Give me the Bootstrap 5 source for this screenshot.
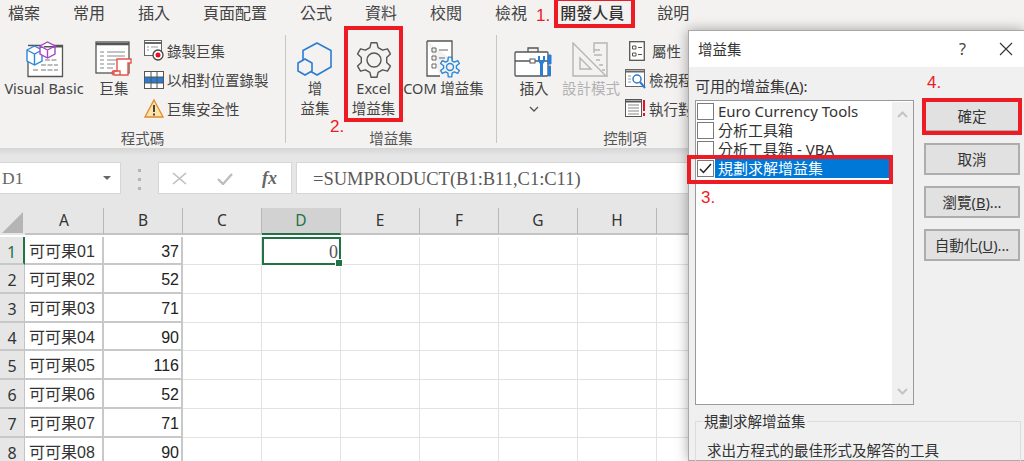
<!DOCTYPE html>
<html lang="zh-Hant">
<head>
  <meta charset="UTF-8">
  <meta name="viewport" content="width=device-width, initial-scale=1.0">
  <title>增益集</title>
  <link href="https://cdn.jsdelivr.net/npm/bootstrap@5.3.0/dist/css/bootstrap.min.css" rel="stylesheet">
  <style>
    html, body { height: 461px; overflow: hidden; }
    body {
      position: relative;
      width: 1024px;
      background: #fff;
      color: #444;
      font-family: "Noto Sans", "Noto Sans CJK TC", sans-serif;
      font-size: 14.5px;
      line-height: 20px;
    }

    /* ribbon */
    .rb-top { height: 148px; background: #f3f2f1; }
    .rb-tabs { height: 28px; padding-left: 8px; gap: 33px; font-size: 16px; line-height: 26px; white-space: nowrap; }
    .rb-tab-on { font-weight: 500; color: #333; }
    .rb-groups { height: 120px; padding-top: 7px; }
    .rb-group { height: 108px; border-right: 1px solid #c6c6c6; flex: none; }
    .rb-g1 { width: 286px; }
    .rb-g2 { width: 211px; }
    .rb-g3 { width: 256px; border: 0; }
    .rb-items { height: 93px; }
    .rb-label { height: 15px; text-align: center; color: #555; }
    .rb-btn { flex: none; text-align: center; white-space: nowrap; color: #444; }
    .rb-icon { height: 43px; display: flex; align-items: flex-end; justify-content: center; }
    .rb-off { color: #b1b1b1; }
    .rb-small { flex: none; padding-top: 1px; white-space: nowrap; }
    .rb-line { height: 29px; display: flex; align-items: center; gap: 3px; }
    .rb-line svg { flex: none; }
    .w-vb { width: 88px; }
    .w-mc { width: 52px; }
    .w-ad { width: 58px; }
    .w-xl { width: 59px; }
    .w-com { width: 81px; }
    .w-in { width: 54px; margin-left: 10px; }
    .w-dz { width: 60px; }

    /* formula bar */
    .fx-bar {
      height: 60px;
      padding-top: 14px;
      gap: 4px;
      background: linear-gradient(#d4d4d4, #e6e6e6 7px);
    }
    .fx-box { height: 32px; background: #fff; border: 1px solid #d6d6d6; flex: none; }
    .fx-name { width: 121px; border-left: 0; padding: 0 9px 0 2px; font: 17.5px/30px "Liberation Serif", serif; color: #666; }
    .fx-caret { width: 0; height: 0; border: 4px solid transparent; border-top-color: #666; border-bottom: 0; }
    .fx-dots { width: 29px; flex: none; }
    .fx-dots span { display: block; width: 3px; height: 3px; background: #b5b5b5; margin: 3px 0; }
    .fx-btns { width: 134px; padding: 0 14px 0 13px; }
    .fx-sym { font: italic 700 18px/30px "Liberation Serif", serif; color: #666; }
    .fx-input { flex: 1; padding-left: 16px; font: 18.5px/32px "Liberation Serif", serif; color: #595959; border-right: 0; white-space: nowrap; }

    /* sheet */
    .sheet { display: grid; grid-template-columns: 25px repeat(9, 79px); grid-auto-rows: 28.7px; }
    .sh-corner, .sh-col, .sh-row { background: #e6e6e6; color: #333; font-size: 15.5px; }
    .sh-corner { position: relative; height: 27px; }
    .sh-corner::after {
      content: "";
      position: absolute;
      right: 2px; bottom: 2px;
      border-style: solid;
      border-width: 0 0 21px 21px;
      border-color: transparent transparent #b5b5b5 transparent;
    }
    .sh-col { height: 27px; border-right: 1px solid #b8b8b8; border-bottom: 2px solid #c4c4c4; text-align: center; line-height: 25px; }
    .sh-col-on { background: #d2d2d2; color: #217346; border-bottom-color: #217346; }
    .sh-row { border-bottom: 2px solid #c8c8c8; border-right: 1px solid #c4c4c4; text-align: center; line-height: 30px; font-size: 16px; }
    .sh-row-on { color: #217346; border-right: 2px solid #217346; }
    .sh-cell { border-right: 1px solid #e2e2e2; border-bottom: 1px solid #e2e2e2; line-height: 30px; font-size: 16px; color: #222; font-family: "Liberation Sans", "Noto Sans CJK TC", sans-serif; }
    .sh-data { border-right: 2px solid #c8c8c8; border-bottom: 2px solid #c8c8c8; white-space: nowrap; }
    .sh-a { padding-left: 4px; color: #333; }
    .sh-b { text-align: right; padding-right: 2px; }
    .sh-active { position: relative; border: 2px solid #217346; text-align: right; padding-right: 1px; font: 18px/27px "Liberation Serif", serif; color: #555; }
    .sh-active::after { content: ""; position: absolute; right: -4px; bottom: -4px; width: 6px; height: 6px; background: #217346; border: 1px solid #fff; box-sizing: content-box; }

    /* dialog */
    .dlg {
      position: absolute;
      left: 688px; top: 30px;
      width: 336px; height: 431px;
      background: #f0f0f0;
      border: 1px solid #a9a9a9;
      border-right: 0;
      box-shadow: 0 0 12px rgba(0,0,0,.35);
      color: #333;
    }
    .dlg-title { flex: none; height: 36px; background: #fff; padding: 0 11px 0 9px; }
    .dlg-title .dlg-help { font-size: 16px; margin-right: 33px; color: #444; }
    .dlg-main { flex: none; padding: 0 3px 0 6px; gap: 10px; }
    .dlg-left { width: 219px; flex: none; }
    .dlg-cap { height: 33px; padding-top: 9px; line-height: 20px; font-size: 15px; white-space: nowrap; }
    .dlg-list { height: 305px; background: #fff; border: 1px solid #9a9a9a; padding: 1px 0 0 1px; }
    .dlg-items { width: 192px; }
    .dlg-item { height: 19px; line-height: 19px; font-size: 15px; white-space: nowrap; color: #333; }
    .dlg-check { flex: none; width: 17px; height: 17px; margin-right: 1px; border: 1px solid #7a7a7a; background: #fff; display: flex; align-items: center; justify-content: center; }
    .dlg-sel { flex: 1; height: 19px; background: #0078d7; color: #fff; padding-left: 3px; }
    .dlg-plain { padding-left: 3px; }
    .dlg-scroll { width: 21px; background: #f0f0f0; margin-left: auto; padding: 9px 0; }
    .dlg-right { width: 96px; flex: none; padding-top: 33px; }
    .btn.dlg-btn {
      display: block;
      width: 96px; height: 32px;
      margin-bottom: 11px;
      padding: 0;
      background: #e1e1e1;
      border: 2px solid #adadad;
      border-radius: 0;
      color: #333;
      font-size: 14.5px;
      line-height: 27px;
    }
    .dlg-fs { position: relative; flex: none; height: 60px; margin: 16px 3px 0 6px; border: 1px solid #dcdcdc; padding: 18px 0 0 11px; font-size: 14.5px; white-space: nowrap; }
    .dlg-fs-title { position: absolute; left: 7px; top: -11px; background: #f0f0f0; padding: 0 1px; }

    /* red marks from the tutorial */
    .mark-box { position: absolute; border: 4px solid #ed1c24; }
    .mark-num { position: absolute; color: #ed1c24; font-family: "Liberation Sans", sans-serif; font-size: 17px; line-height: 20px; white-space: nowrap; }
  </style>
</head>
<body>
  <div class="rb-top">
    <div class="rb-tabs d-flex">
      <span>檔案</span><span>常用</span><span>插入</span><span>頁面配置</span><span>公式</span><span>資料</span><span>校閱</span><span>檢視</span><span class="rb-tab-on">開發人員</span><span>說明</span>
    </div>
    <div class="rb-groups d-flex">
      <div class="rb-group rb-g1">
        <div class="rb-items d-flex">
          <div class="rb-btn w-vb">
            <div class="rb-icon">
              <svg width="39" height="37" viewBox="0 0 39 37" fill="none">
                <path d="M3 4.5H37.5V35.500H3V20" stroke="#555" stroke-width="1.300" fill="#fff"/><path d="M19 5.500H37" stroke="#555" stroke-width="2"/>
                <path d="M16 24H33M16 29H33M8 29H13M20 19H33" stroke="#777" stroke-dasharray="5 1.500"/>
                <path d="M2 9L9.500 5L17 9V20L9.500 24L2 20ZM2 9L9.500 13L17 9M9.500 13V24" fill="#fff" stroke="#2b88d8" stroke-width="1.400"/>
                <path d="M15 5L22.500 1L30 5V13L22.500 17L15 13ZM15 5L22.500 9L30 5M22.500 9V17" fill="#fff" stroke="#a744c6" stroke-width="1.400"/>
              </svg>
            </div>
            <div>Visual Basic</div>
          </div>
          <div class="rb-btn w-mc">
            <div class="rb-icon">
              <svg width="38" height="37" viewBox="0 0 38 37" fill="none">
                <rect x="1" y="1" width="33" height="31" fill="#fff" stroke="#555" stroke-width="1.300"/><path d="M1 3H34" stroke="#555" stroke-width="2.500"/>
                <path d="M5 11H9M12 11H30M5 15H9M12 15H30M5 19H9M12 19H22M5 23H9M12 23H20M5 27H9M12 27H18" stroke="#888"/>
                <path d="M22 18H36V22H33V34H19V30H22Z" fill="#fff" stroke="#e8534c" stroke-width="1.400"/><path d="M18 34A3 3 0 0 1 18 30H25V34" stroke="#e8534c" stroke-width="1.400"/>
              </svg>
            </div>
            <div>巨集</div>
          </div>
          <div class="rb-small ms-1">
            <div class="rb-line">
              <svg width="20" height="21" viewBox="0 0 20 21" fill="none"><rect x=".5" y=".5" width="17" height="15" fill="#fff" stroke="#666"/><path d="M1 3H17" stroke="#666" stroke-width="2"/><path d="M3 7H5M3 10H5M7 7H14" stroke="#999"/><circle cx="14" cy="15" r="5" fill="#fff" stroke="#444" stroke-width="1.300"/><circle cx="14" cy="15" r="2.500" fill="#e81123"/></svg>
              <span>錄製巨集</span>
            </div>
            <div class="rb-line">
              <svg width="20" height="18" viewBox="0 0 20 18" fill="none"><rect x=".5" y=".5" width="19" height="17" fill="#fff" stroke="#555"/><rect x="1" y="6" width="18" height="6" fill="#2b7cd3"/><path d="M7 1V17M13 1V17M1 6H19M1 12H19" stroke="#555"/></svg>
              <span>以相對位置錄製</span>
            </div>
            <div class="rb-line">
              <svg width="20" height="19" viewBox="0 0 20 19"><path d="M10 1L19 18H1Z" fill="#fce4a8" stroke="#e08a2b" stroke-width="1.300"/><path d="M9 6H11V13H9ZM9 14.500H11V16.500H9Z" fill="#444"/></svg>
              <span>巨集安全性</span>
            </div>
          </div>
        </div>
        <div class="rb-label">程式碼</div>
      </div>
      <div class="rb-group rb-g2">
        <div class="rb-items d-flex">
          <div class="rb-btn w-ad">
            <div class="rb-icon">
              <svg width="38" height="36" viewBox="0 0 38 36" fill="none"><path d="M21 1L35 8.500V25L21 33L7 25V8.500Z" stroke="#2b7cd3" stroke-width="1.600"/><path d="M9 17L16 21V29L9 33L2 29V21Z" fill="#f3f2f1" stroke="#2b7cd3" stroke-width="1.600"/></svg>
            </div>
            <div>增<br>益集</div>
          </div>
          <div class="rb-btn w-xl">
            <div class="rb-icon">
              <svg width="38" height="36" viewBox="0 0 38 36" fill="none"><path class="gear-path" data-c="19 18" data-r="13 17.500" data-n="6" stroke="#555" stroke-width="1.400" stroke-linejoin="round"/><circle cx="19" cy="18" r="7" stroke="#555" stroke-width="1.400"/></svg>
            </div>
            <div>Excel<br>增益集</div>
          </div>
          <div class="rb-btn w-com">
            <div class="rb-icon">
              <svg width="36" height="38" viewBox="0 0 36 38" fill="none"><path d="M1 1H26V20M14 36H1V1" fill="#fff" stroke="#555" stroke-width="1.300"/><path d="M6 8H10V12H6ZM6 16H10V20H6ZM6 24H10V28H6Z" stroke="#666"/><path d="M13 10H22M13 18H19" stroke="#666"/><path class="gear-path" data-c="24 27" data-r="6.500 10" data-n="6" fill="#f3f2f1" stroke="#2b88d8" stroke-width="1.400" stroke-linejoin="round"/><circle cx="24" cy="27" r="3.500" stroke="#2b88d8" stroke-width="1.400"/></svg>
            </div>
            <div>COM 增益集</div>
          </div>
        </div>
        <div class="rb-label">增益集</div>
      </div>
      <div class="rb-group rb-g3">
        <div class="rb-items d-flex">
          <div class="rb-btn w-in">
            <div class="rb-icon">
              <svg width="40" height="32" viewBox="0 0 40 32" fill="none"><path d="M14 6V2H24V6" stroke="#555" stroke-width="1.300"/><rect x="1" y="6" width="33" height="24" rx="1" fill="#fff" stroke="#555" stroke-width="1.300"/><path d="M1 15H17M21 15H34" stroke="#555" stroke-width="1.300"/><rect x="16" y="13" width="5" height="4" fill="#fff" stroke="#555"/><path d="M24 10V15L26 18V30H29V18L31 15V10L29 10V14H26V10Z" fill="#2b7cd3"/><path d="M34 9H37V18H34ZM34.500 20H36.500V30H34.500Z" fill="#2b7cd3" stroke="#2b7cd3"/></svg>
            </div>
            <div>插入</div>
            <svg class="d-block mx-auto mt-2" width="10" height="6" viewBox="0 0 10 6" fill="none"><path d="M1 1L5 5L9 1" stroke="#555" stroke-width="1.300"/></svg>
          </div>
          <div class="rb-btn w-dz rb-off">
            <div class="rb-icon">
              <svg width="38" height="36" viewBox="0 0 38 36" fill="none" stroke="#b5b5b5" stroke-width="1.400"><path d="M1 1L34 34H1ZM8 16L19 27H8Z"/><path d="M22 11V1H35V35H35M22 8H28M22 13H30M24 18H28M27 23H31M30 28H33" /></svg>
            </div>
            <div>設計模式</div>
          </div>
          <div class="rb-small ms-1">
            <div class="rb-line ps-1">
              <svg width="16" height="20" viewBox="0 0 16 20" fill="none"><rect x=".7" y=".7" width="14.600" height="18.600" fill="#fff" stroke="#555" stroke-width="1.300"/><path d="M3.500 5H7V8H3.500ZM3.500 12H7V15H3.500ZM9 6.500H13M9 13.500H13" stroke="#555"/></svg>
              <span class="ms-1">屬性</span>
            </div>
            <div class="rb-line">
              <svg width="21" height="21" viewBox="0 0 21 21" fill="none"><rect x=".5" y=".5" width="19" height="17" fill="#fff" stroke="#666"/><path d="M1 2.500H19" stroke="#666" stroke-width="2"/><path d="M3 7H6M3 10H6M3 13H6" stroke="#999"/><circle cx="12" cy="10" r="4" fill="#fff" stroke="#2b7cd3" stroke-width="1.500"/><path d="M15 13L20 19" stroke="#2b7cd3" stroke-width="2"/></svg>
              <span>檢視程式碼</span>
            </div>
            <div class="rb-line">
              <svg width="21" height="19" viewBox="0 0 21 19" fill="none"><rect x=".5" y=".5" width="16" height="17" fill="#fff" stroke="#555"/><path d="M1 2.500H16" stroke="#555" stroke-width="2"/><path d="M3 6H14M3 9H14M3 12H14M3 15H14" stroke="#888"/><path d="M19 1V12M19 14V17" stroke="#e81123" stroke-width="2"/></svg>
              <span>執行對話方塊</span>
            </div>
          </div>
        </div>
        <div class="rb-label">控制項</div>
      </div>
    </div>
  </div>

  <div class="fx-bar d-flex">
    <div class="fx-box fx-name d-flex align-items-center justify-content-between"><span>D1</span><span class="fx-caret"></span></div>
    <div class="fx-dots d-flex flex-column align-items-center pt-1"><span></span><span></span><span></span></div>
    <div class="fx-box fx-btns d-flex align-items-center justify-content-between">
      <svg width="15" height="13" viewBox="0 0 15 13" fill="none"><path d="M1 1L14 12M14 1L1 12" stroke="#bdbdbd" stroke-width="1.600"/></svg>
      <svg width="16" height="13" viewBox="0 0 16 13" fill="none"><path d="M1 7L6 12L15 2" stroke="#bdbdbd" stroke-width="2.400"/></svg>
      <span class="fx-sym">fx</span>
    </div>
    <div class="fx-box fx-input">=SUMPRODUCT(B1:B11,C1:C11)</div>
  </div>

  <div class="sheet" id="sheet"></div>

  <div class="dlg d-flex flex-column">
    <div class="dlg-title d-flex align-items-center justify-content-between">
      <span>增益集</span>
      <span class="d-flex align-items-center">
        <span class="dlg-help">?</span>
        <svg width="14" height="14" viewBox="0 0 14 14" fill="none"><path d="M1 1L13 13M13 1L1 13" stroke="#333" stroke-width="1.100"/></svg>
      </span>
    </div>
    <div class="dlg-main d-flex">
      <div class="dlg-left">
        <div class="dlg-cap">可用的增益集(<u>A</u>):</div>
        <div class="dlg-list d-flex">
          <div class="dlg-items" id="addins"></div>
          <div class="dlg-scroll d-flex flex-column justify-content-between align-items-center">
            <svg width="11" height="7" viewBox="0 0 11 7" fill="none"><path d="M1 6L5.500 1.500L10 6" stroke="#c4c4c4" stroke-width="2"/></svg>
            <svg width="11" height="7" viewBox="0 0 11 7" fill="none"><path d="M1 1L5.500 5.500L10 1" stroke="#c4c4c4" stroke-width="2"/></svg>
          </div>
        </div>
      </div>
      <div class="dlg-right">
        <button class="btn dlg-btn">確定</button>
        <button class="btn dlg-btn">取消</button>
        <button class="btn dlg-btn">瀏覽(<u>B</u>)...</button>
        <button class="btn dlg-btn">自動化(<u>U</u>)...</button>
      </div>
    </div>
    <div class="dlg-fs">
      <span class="dlg-fs-title">規劃求解增益集</span>
      求出方程式的最佳形式及解答的工具
    </div>
  </div>

  <span class="mark-num" style="left:536px;top:6px">1.</span>
  <span class="mark-num" style="left:330px;top:117px">2.</span>
  <span class="mark-num" style="left:701px;top:188px">3.</span>
  <span class="mark-num" style="left:927px;top:73px">4.</span>
  <div class="mark-box" style="left:554px;top:-3px;width:81px;height:31px"></div>
  <div class="mark-box" style="left:344px;top:26px;width:59px;height:96px"></div>
  <div class="mark-box" style="left:687px;top:155px;width:206px;height:29px"></div>
  <div class="mark-box" style="left:922px;top:98px;width:100px;height:37px"></div>

  <script>
    // gears: n teeth between the two radii
    document.querySelectorAll('.gear-path').forEach(p => {
      const [cx, cy] = p.dataset.c.split(' ').map(Number);
      const [r1, r2] = p.dataset.r.split(' ').map(Number);
      const n = Number(p.dataset.n);
      const pts = [];
      for (let i = 0; i < n; i++) {
        const a = i * 2 * Math.PI / n - Math.PI / 2;
        const s = Math.PI / n;
        [[r1, -s * 0.62], [r2, -s * 0.32], [r2, s * 0.32], [r1, s * 0.62]].forEach(([r, d]) => {
          pts.push((cx + r * Math.cos(a + d)).toFixed(1) + ' ' + (cy + r * Math.sin(a + d)).toFixed(1));
        });
      }
      p.setAttribute('d', 'M' + pts.join('L') + 'Z');
    });

    const nilai = [37, 52, 71, 90, 116, 52, 71, 90];
    const kolom = ['A', 'B', 'C', 'D', 'E', 'F', 'G', 'H', ''];
    let html = '<div class="sh-corner"></div>';
    html += kolom.map(k => `<div class="sh-col ${k === 'D' ? 'sh-col-on' : ''}">${k}</div>`).join('');
    nilai.forEach((n, i) => {
      html += `<div class="sh-row ${i === 0 ? 'sh-row-on' : ''}">${i + 1}</div>`;
      html += `<div class="sh-cell sh-data sh-a">可可果0${i + 1}</div>`;
      html += `<div class="sh-cell sh-data sh-b">${n}</div>`;
      html += '<div class="sh-cell"></div>';
      html += i === 0 ? '<div class="sh-active">0</div>' : '<div class="sh-cell"></div>';
      html += '<div class="sh-cell"></div>'.repeat(5);
    });
    document.getElementById('sheet').innerHTML = html;

    const addins = ['Euro Currency Tools', '分析工具箱', '分析工具箱 - VBA', '規劃求解增益集'];
    document.getElementById('addins').innerHTML = addins.map((a, i) => `
      <div class="dlg-item d-flex align-items-center">
        <span class="dlg-check">${i === 3 ? '<svg width="13" height="11" viewBox="0 0 13 11" fill="none"><path d="M1 6L4.500 9.500L12 1" stroke="#222" stroke-width="1.500"/></svg>' : ''}</span>
        <span class="${i === 3 ? 'dlg-sel' : 'dlg-plain'}">${a}</span>
      </div>`).join('');
  </script>
  <script src="https://cdn.jsdelivr.net/npm/bootstrap@5.3.0/dist/js/bootstrap.bundle.min.js"></script>
</body>
</html>
